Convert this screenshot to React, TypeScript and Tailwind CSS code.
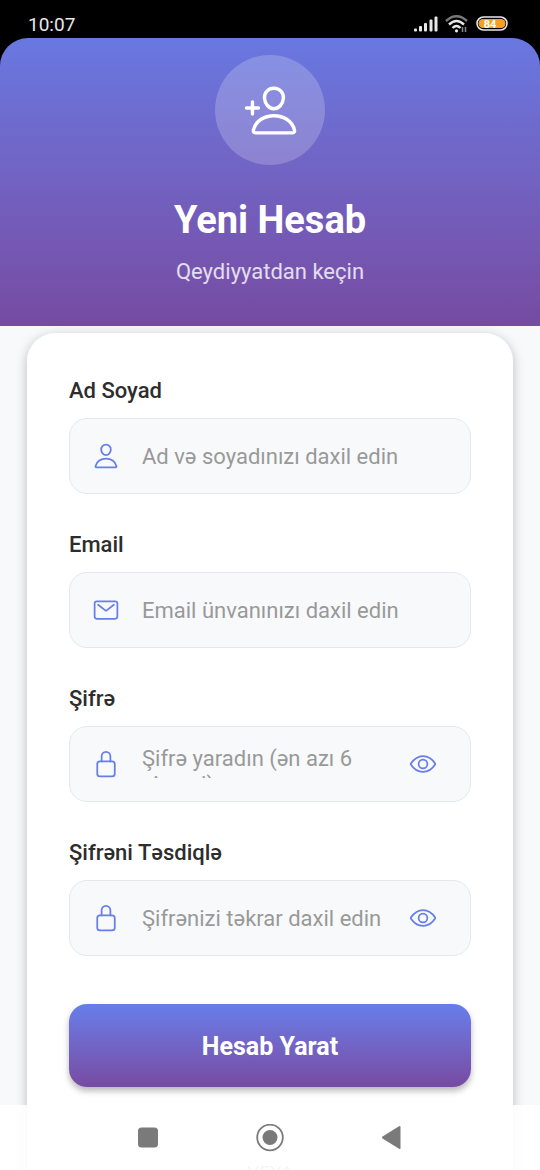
import type { ReactNode } from "react";
import {
  IoEyeOutline,
  IoLockClosedOutline,
  IoMailOutline,
  IoPersonAddOutline,
  IoPersonOutline,
} from "react-icons/io5";

type FieldProps = {
  id: string;
  label: string;
  icon: ReactNode;
  placeholder: string;
  type?: string;
  wrap?: boolean;
  toggle?: boolean;
};

function Field({ id, label, icon, placeholder, type = "text", wrap, toggle }: FieldProps) {
  const control =
    "min-w-0 flex-1 bg-transparent text-[22px] leading-[26px] text-[#333] placeholder:text-[#999] placeholder:opacity-100 outline-none";
  return (
    <div className="flex flex-col gap-[14px]">
      <label htmlFor={id} className="text-[22px] font-medium leading-[26px] text-[#2d2d2d]">
        {label}
      </label>
      <div className="flex h-[76px] items-center rounded-[18px] border border-[#e4e9ee] bg-[#f8f9fb] px-[22px]">
        <span className="mr-[22px] text-[28px] text-[#667eea]">{icon}</span>
        {wrap ? (
          <textarea
            id={id}
            placeholder={placeholder}
            className={`${control} mb-1 block h-8 resize-none overflow-hidden`}
          />
        ) : (
          <input id={id} type={type} placeholder={placeholder} className={`${control} pt-[2px]`} />
        )}
        {toggle && (
          <button type="button" aria-label="Şifrəni göstər" className="px-[11px] text-[28px] text-[#667eea]">
            <IoEyeOutline />
          </button>
        )}
      </div>
    </div>
  );
}

function StatusBar() {
  return (
    <div className="flex h-[38px] items-center justify-between bg-black pl-7 pr-8 pt-[10px] text-[#e8e8e8]">
      <span className="pt-px text-[19px] leading-6">10:07</span>
      <div className="flex items-center gap-[7px]">
        <svg width="24" height="16" viewBox="0 0 24 16" fill="currentColor" aria-hidden="true">
          <rect x="0" y="12.5" width="3" height="3" rx="1" />
          <rect x="5" y="10" width="3" height="5.5" rx="1" />
          <rect x="10" y="7" width="3" height="8.5" rx="1" />
          <rect x="15.5" y="3.5" width="3" height="12" rx="1" />
          <rect x="20.5" y="0.5" width="3" height="15" rx="1" />
        </svg>
        <svg width="24" height="18" viewBox="0 0 24 18" fill="none" stroke="currentColor" strokeWidth="2.4" aria-hidden="true">
          <path d="M1 6Q11.5 -3.5 22 6" stroke="#777" />
          <path d="M4 9.5Q11.5 2.5 19 9.5" />
          <path d="M7.5 13Q11.5 9 15.5 13" />
          <circle cx="11.5" cy="15.8" r="1.6" fill="currentColor" stroke="none" />
          <path d="M17.5 12v5M20.5 12v5" stroke="#888" strokeWidth="1.5" />
        </svg>
        <svg width="32" height="16" viewBox="0 0 32 16" role="img" aria-label="84">
          <rect x="1" y="1" width="30" height="13" rx="6.5" fill="none" stroke="#e8e8e8" strokeWidth="1.6" />
          <path d="M7 3H25V12H7A4.5 4.5 0 0 1 7 3Z" fill="#f5a11f" />
          <path d="M25 3A4.5 4.5 0 0 1 25 12Z" fill="#f5a11f" />
          <text x="14" y="11.5" textAnchor="middle" fill="#fff" className="text-[11px] font-bold">
            84
          </text>
        </svg>
      </div>
    </div>
  );
}

export default function App() {
  return (
    <div className="h-screen overflow-hidden bg-[#f8f9fb] font-['Roboto','Noto_Sans',sans-serif]">
      <header className="bg-black">
        <StatusBar />
        <div className="flex h-72 flex-col items-center rounded-t-[28px] bg-linear-to-b from-[#6878e1] to-[#764ba2] pt-[17px] text-white">
          <div className="flex size-[110px] items-center justify-center rounded-full bg-white/20 text-[55px]">
            <IoPersonAddOutline className="stroke-[8px]" />
          </div>
          <h1 className="mt-8 text-[38px] font-bold leading-[46px]">Yeni Hesab</h1>
          <p className="mt-4 text-[22px] leading-[26px] text-white/80">Qeydiyyatdan keçin</p>
        </div>
      </header>

      <main className="mx-[27px] mt-[7px] rounded-[28px] bg-white px-[42px] pb-10 pt-[45px] shadow-[0_3px_12px_rgba(0,0,0,0.25)]">
        <form className="flex flex-col gap-[38px]" onSubmit={(e) => e.preventDefault()}>
          <Field id="name" label="Ad Soyad" icon={<IoPersonOutline />} placeholder="Ad və soyadınızı daxil edin" />
          <Field id="email" label="Email" type="email" icon={<IoMailOutline />} placeholder="Email ünvanınızı daxil edin" />
          <Field id="password" label="Şifrə" wrap toggle icon={<IoLockClosedOutline />} placeholder="Şifrə yaradın (ən azı 6 simvol)" />
          <Field id="confirm" label="Şifrəni Təsdiqlə" type="password" toggle icon={<IoLockClosedOutline />} placeholder="Şifrənizi təkrar daxil edin" />
          <button
            type="submit"
            className="mt-[10px] h-[83px] rounded-[18px] bg-linear-to-b from-[#667eea] to-[#764ba2] pt-[2px] text-[25px] font-bold text-white shadow-[0_4px_6px_rgba(0,0,0,0.28)]"
          >
            Hesab Yarat
          </button>
        </form>
        <div className="mt-[74px] flex items-center gap-5 text-[19px] leading-6 text-[#999]">
          <span className="h-px flex-1 bg-[#e4e9ee]" />
          VEYA
          <span className="h-px flex-1 bg-[#e4e9ee]" />
        </div>
      </main>

      <nav className="fixed inset-x-0 bottom-0 flex h-[65px] items-center justify-center gap-[94px] bg-white/90 text-[#7a7a7a]">
        <button type="button" aria-label="Son tətbiqlər">
          <svg width="28" height="28" viewBox="0 0 28 28" fill="currentColor">
            <rect x="4" y="3.5" width="20" height="20" rx="3.5" />
          </svg>
        </button>
        <button type="button" aria-label="Ana ekran">
          <svg width="28" height="28" viewBox="0 0 28 28" fill="currentColor">
            <circle cx="14" cy="13.5" r="12.8" fill="none" stroke="currentColor" strokeWidth="1.8" />
            <circle cx="14" cy="13.5" r="7.5" />
          </svg>
        </button>
        <button type="button" aria-label="Geri">
          <svg width="28" height="28" viewBox="0 0 28 28" fill="currentColor">
            <path d="M4.5 12.5Q3.5 13.5 4.5 14.5L21 24.8Q22.5 25.5 22.5 24V3Q22.5 1.5 21 2.2Z" />
          </svg>
        </button>
      </nav>
    </div>
  );
}
